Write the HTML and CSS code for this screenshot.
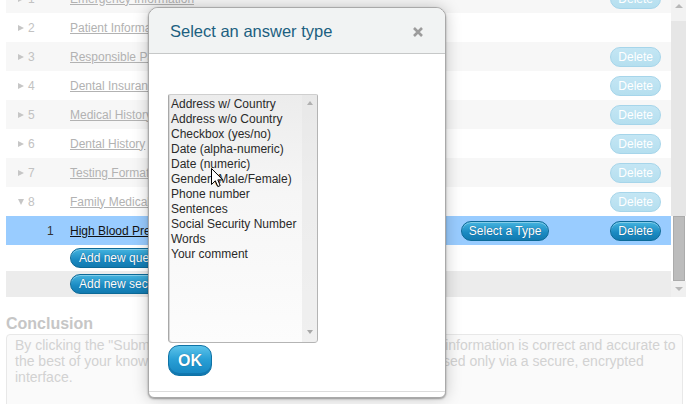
FILE: index.html
```html
<!DOCTYPE html>
<html>
<head>
<meta charset="utf-8">
<title>Form builder</title>
<link rel="stylesheet" href="styles.css">
</head>
<body>
<div class="page">
  <div class="scroller">
    <div class="list">
      <div class="row alt"><div class="num"><span class="tri-r"></span>1</div><a class="title">Emergency Information</a><div class="acts"><span class="btn faded">Delete</span></div></div>
      <div class="row"><div class="num"><span class="tri-r"></span>2</div><a class="title">Patient Information</a><div class="acts"></div></div>
      <div class="row alt"><div class="num"><span class="tri-r"></span>3</div><a class="title">Responsible Party</a><div class="acts"><span class="btn faded">Delete</span></div></div>
      <div class="row"><div class="num"><span class="tri-r"></span>4</div><a class="title">Dental Insurance</a><div class="acts"><span class="btn faded">Delete</span></div></div>
      <div class="row alt"><div class="num"><span class="tri-r"></span>5</div><a class="title">Medical History</a><div class="acts"><span class="btn faded">Delete</span></div></div>
      <div class="row"><div class="num"><span class="tri-r"></span>6</div><a class="title">Dental History</a><div class="acts"><span class="btn faded">Delete</span></div></div>
      <div class="row alt"><div class="num"><span class="tri-r"></span>7</div><a class="title">Testing Format</a><div class="acts"><span class="btn faded">Delete</span></div></div>
      <div class="row"><div class="num"><span class="tri-d"></span>8</div><a class="title">Family Medical History</a><div class="acts"><span class="btn faded">Delete</span></div></div>
      <div class="row selected"><div class="qnum">1</div><a class="qtitle">High Blood Pressure</a><div class="acts"><span class="btn">Select a Type</span><span class="btn">Delete</span></div></div>
      <div class="row add"><span class="btn addbtn">Add new question</span></div>
      <div class="row add grey"><span class="btn addbtn">Add new section</span></div>
    </div>
    <div class="vscroll">
      <div class="vs-top"><span class="up"></span></div>
      <div class="vs-track"></div>
      <div class="vs-thumb"></div>
      <div class="vs-bottom"><span class="down"></span></div>
    </div>
  </div>
  <h2 class="concl-title">Conclusion</h2>
  <div class="concl-box">By clicking the "Submit" button, you are confirming that all of the new information is correct and accurate to<br>the best of your knowledge. Your personal information will solely be used only via a secure, encrypted<br>interface.</div>
</div>

<div class="modal">
  <div class="m-head">
    <span class="m-title">Select an answer type</span>
    <svg class="m-close" width="10" height="10" viewBox="0 0 10 10"><path d="M1 1L9 9M9 1L1 9" stroke="#9c9c9c" stroke-width="2.6" stroke-linecap="butt"/></svg>
  </div>
  <div class="m-body">
    <div class="listbox">
      <div class="opts">
        <div>Address w/ Country</div>
        <div>Address w/o Country</div>
        <div>Checkbox (yes/no)</div>
        <div>Date (alpha-numeric)</div>
        <div>Date (numeric)</div>
        <div>Gender (Male/Female)</div>
        <div>Phone number</div>
        <div>Sentences</div>
        <div>Social Security Number</div>
        <div>Words</div>
        <div>Your comment</div>
      </div>
      <div class="lb-scroll"><span class="up"></span><span class="down"></span></div>
    </div>
    <button class="ok">OK</button>
  </div>
  <div class="m-foot"></div>
</div>

<svg class="cursor" width="13" height="20" viewBox="0 0 13 20"><path d="M0.5 0.5V16.5L4.3 12.8L6.8 18.6L9.2 17.6L6.8 11.9H11.8Z" fill="#fff" stroke="#000" stroke-width="1" stroke-linejoin="miter"/></svg>
</body>
</html>
```

FILE: styles.css
```css
html, body {
  margin: 0;
  padding: 0;
}
body {
  width: 693px;
  height: 404px;
  overflow: hidden;
  position: relative;
  background: #fff;
  font-family: "Liberation Sans", Arial, sans-serif;
}
.page {
  padding-left: 6px;
}
.scroller {
  display: flex;
  width: 680px;
  height: 297px;
  overflow: hidden;
}
.list {
  width: 665px;
  margin-top: -16px;
  flex: none;
}
.row {
  display: flex;
  align-items: center;
  height: 29px;
  background: #fff;
}
.row.alt {
  background: #f7f7f7;
}
.num {
  width: 52px;
  padding-left: 12px;
  display: flex;
  align-items: center;
  gap: 4px;
  font-size: 12px;
  color: #c2c2c2;
  flex: none;
}
.tri-r {
  width: 0;
  height: 0;
  border-left: 6px solid #c6c6c6;
  border-top: 3.5px solid transparent;
  border-bottom: 3.5px solid transparent;
}
.tri-d {
  width: 0;
  height: 0;
  border-top: 6px solid #c6c6c6;
  border-left: 3.5px solid transparent;
  border-right: 3.5px solid transparent;
}
.title {
  font-size: 12px;
  color: #b2b2b2;
  text-decoration: underline;
  white-space: nowrap;
}
.qnum {
  width: 23px;
  padding-left: 41px;
  font-size: 12px;
  color: #333;
  flex: none;
}
.qtitle {
  font-size: 12px;
  color: #111;
  text-decoration: underline;
  white-space: nowrap;
}
.row.selected {
  background: #99ccff;
}
.acts {
  margin-left: auto;
  padding-right: 10px;
  display: flex;
  align-items: center;
  gap: 61px;
}
.btn {
  display: inline-block;
  height: 18px;
  line-height: 18px;
  padding: 0 7px;
  border-radius: 10px;
  border: 1px solid #0c6a98;
  background: linear-gradient(#45b4df, #1a8ac2 60%, #127ab0);
  color: #fff;
  font-size: 12px;
  text-shadow: 0 0 1px rgba(0, 40, 80, 0.6);
  box-shadow: inset 0 1px 0 rgba(255, 255, 255, 0.35);
  white-space: nowrap;
}
.btn.faded {
  border-color: #a6d5ea;
  background: linear-gradient(#c4e6f4, #b5dfef);
  text-shadow: none;
  box-shadow: none;
}
.row.add {
  height: 26px;
  padding-left: 64px;
}
.row.add.grey {
  background: #ececec;
}
.addbtn {
  padding: 0 8px;
}
.vscroll {
  width: 15px;
  display: flex;
  flex-direction: column;
  flex: none;
}
.vs-top {
  height: 21px;
  background: #f2f2f2;
  display: flex;
  justify-content: center;
  padding-top: 4px;
  box-sizing: border-box;
}
.vs-track {
  height: 195px;
  background: #e6e6e6;
}
.vs-thumb {
  height: 65px;
  margin: 0 1px 0 2px;
  background: #bcbcbc;
  border: 1px solid #ababab;
  box-sizing: border-box;
}
.vs-bottom {
  flex: 1;
  background: #f0f0f0;
  display: flex;
  justify-content: center;
  align-items: center;
}
.up {
  width: 0;
  height: 0;
  border-bottom: 4px solid #b8b8b8;
  border-left: 4px solid transparent;
  border-right: 4px solid transparent;
}
.down {
  width: 0;
  height: 0;
  border-top: 4px solid #b8b8b8;
  border-left: 4px solid transparent;
  border-right: 4px solid transparent;
}
.concl-title {
  margin: 16px 0 0;
  font-size: 16px;
  line-height: 21px;
  font-weight: bold;
  color: #c6c6c6;
}
.concl-box {
  width: 677px;
  height: 120px;
  box-sizing: border-box;
  border: 1px solid #e8e8e8;
  border-radius: 4px;
  background: #fafafa;
  padding: 2px 8px;
  font-size: 14px;
  line-height: 16px;
  color: #d2d2d2;
  white-space: nowrap;
  overflow: hidden;
}

/* modal */
.modal {
  position: absolute;
  left: 148px;
  top: 7px;
  width: 298px;
  height: 391px;
  box-sizing: border-box;
  border: 1px solid #a9a9a9;
  border-radius: 10px 10px 6px 6px;
  background: #fff;
  box-shadow: 0 1px 2px rgba(0, 0, 0, 0.35), 0 0 16px rgba(0, 0, 0, 0.22);
  display: flex;
  flex-direction: column;
  overflow: hidden;
}
.m-head {
  flex: none;
  background: #f1f3f3;
  border-bottom: 1px solid #c6c8c8;
  display: flex;
  align-items: center;
  justify-content: space-between;
  padding: 2px 22px 0 21px;
  box-sizing: content-box;
  height: 43px;
}
.m-title {
  font-size: 16.5px;
  color: #1c5f80;
}
.m-close {
  display: block;
  margin-top: 1px;
}
.m-body {
  flex: 1;
  padding: 40px 19px 0;
  display: flex;
  flex-direction: column;
  align-items: flex-start;
}
.listbox {
  width: 150px;
  height: 249px;
  box-sizing: border-box;
  border: 1px solid #b4b4b4;
  border-top-color: #cfcfcf;
  border-left-color: #a8a8a8;
  border-radius: 2px 2px 4px 4px;
  background: linear-gradient(#ececec, #f6f6f6 40%, #fcfcfc);
  box-shadow: inset 1px 0 0 #d8d8d8;
  display: flex;
}
.opts {
  flex: 1;
  padding: 2px 0 0 2px;
  font-size: 12px;
  line-height: 15px;
  color: #2a2a2a;
  white-space: nowrap;
}
.lb-scroll {
  width: 15px;
  background: rgba(230, 230, 230, 0.55);
  display: flex;
  flex-direction: column;
  justify-content: space-between;
  align-items: center;
  padding: 6px 0 8px;
}
.lb-scroll .up, .lb-scroll .down {
  border-width: 4px 3.5px;
}
.lb-scroll .up {
  border-top: 0;
  border-bottom-color: #b0b0b0;
}
.lb-scroll .down {
  border-bottom: 0;
  border-top-color: #a8a8a8;
}
.ok {
  margin-top: 2px;
  width: 44px;
  height: 31px;
  border: 1px solid #0f73a6;
  border-radius: 11px;
  background: linear-gradient(#5cc3ea, #2aa0d6 45%, #1585c0);
  box-shadow: inset 0 -2px 0 rgba(0, 70, 120, 0.25);
  color: #fff;
  font-family: "Liberation Sans", Arial, sans-serif;
  font-weight: bold;
  font-size: 16px;
  padding: 0;
  text-shadow: 0 0 1px rgba(0, 50, 90, 0.6);
}
.m-foot {
  height: 5px;
  flex: none;
  border-top: 1px solid #dcdcdc;
}
.cursor {
  position: absolute;
  left: 211px;
  top: 168px;
}
```
